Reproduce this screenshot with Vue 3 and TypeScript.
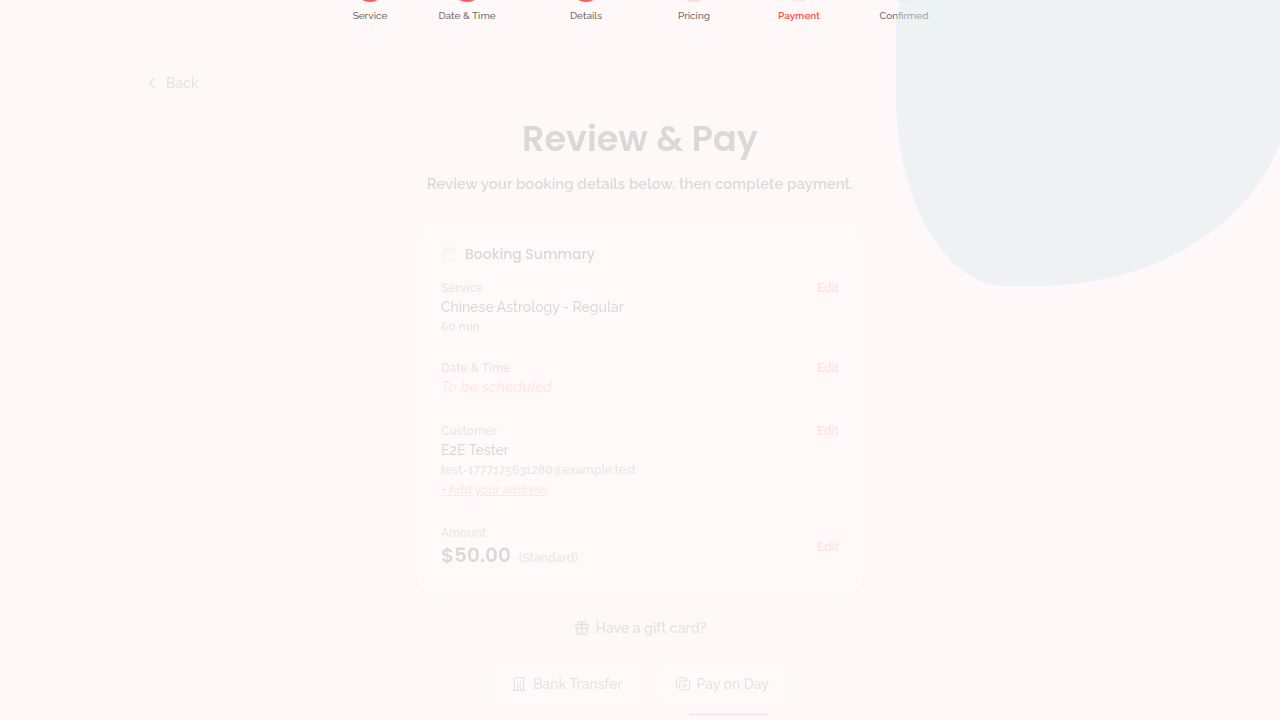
<script setup lang="ts">
interface Step { label: string; state: string }
const steps: Step[] = [
  { label: 'Service', state: 'done' },
  { label: 'Date & Time', state: 'done' },
  { label: 'Details', state: 'done' },
  { label: 'Pricing', state: 'soft' },
  { label: 'Payment', state: 'current' },
  { label: 'Confirmed', state: 'next' },
]
</script>

<template>
  <div class="page">
    <ol class="steps">
      <li v-for="s in steps" :key="s.label" :class="['step', s.state]">
        <span class="dot"></span>
        <span class="step-label">{{ s.label }}</span>
      </li>
    </ol>
    <main class="content">
      <button class="back" type="button">
        <svg width="16" height="16" viewBox="0 0 16 16" fill="none" stroke="currentColor" stroke-width="1.5" stroke-linecap="round" stroke-linejoin="round"><path d="M10 3.5 5.5 8l4.5 4.5" /></svg>
        Back
      </button>
      <h1>Review &amp; Pay</h1>
      <p class="lead">Review your booking details below, then complete payment.</p>

      <section class="card">
        <h2>
          <svg width="16" height="16" viewBox="0 0 16 16" fill="none" stroke="currentColor" stroke-width="1.3" stroke-linejoin="round"><path d="M5.5 2.700H4.500a1.500 1.500 0 0 0-1.500 1.500v8.600a1.500 1.500 0 0 0 1.500 1.500h7a1.500 1.500 0 0 0 1.500-1.500V4.200a1.500 1.500 0 0 0-1.500-1.500h-1M5.500 2.500a1 1 0 0 1 1-1h3a1 1 0 0 1 1 1c0 1-.8 1.600-1.600 1.600H7.100c-.8 0-1.600-.6-1.600-1.600z" /></svg>
          Booking Summary
        </h2>
        <div class="row">
          <div>
            <p class="label">Service</p>
            <p class="value">Chinese Astrology - Regular</p>
            <p class="sub">60 min</p>
          </div>
          <button class="edit" type="button">Edit</button>
        </div>
        <div class="row">
          <div>
            <p class="label">Date &amp; Time</p>
            <p class="value pending">To be scheduled</p>
          </div>
          <button class="edit" type="button">Edit</button>
        </div>
        <div class="row">
          <div>
            <p class="label">Customer</p>
            <p class="value">E2E Tester</p>
            <p class="sub">test-1777175631280@example.test</p>
            <a class="address" href="#">+ Add your address</a>
          </div>
          <button class="edit" type="button">Edit</button>
        </div>
        <div class="row amount">
          <div>
            <p class="label">Amount</p>
            <p class="total"><strong>$50.00</strong><span class="sub">(Standard)</span></p>
          </div>
          <button class="edit" type="button">Edit</button>
        </div>
      </section>

      <button class="gift" type="button">
        <svg width="16" height="16" viewBox="0 0 16 16" fill="none" stroke="currentColor" stroke-width="1.4" stroke-linejoin="round"><rect x="1.700" y="4.800" width="12.600" height="3.400" rx="1.200" /><path d="M3 8.200V13a1.300 1.300 0 0 0 1.300 1.300h7.400A1.300 1.300 0 0 0 13 13V8.200M8 4.800v9.500M8 4.800H5.200a1.700 1.700 0 1 1 2.200-2.200L8 4.800l.6-2.200a1.700 1.700 0 1 1 1.700 2.200H8" /></svg>
        Have a gift card?
      </button>

      <div class="methods">
        <button class="method" type="button">
          <svg width="16" height="16" viewBox="0 0 16 16" fill="none" stroke="currentColor" stroke-width="1.2" stroke-linejoin="round"><path d="M1.800 14.400h12.400M3.300 14.400V2.500a1 1 0 0 1 1-1h7.400a1 1 0 0 1 1 1v11.900M6.500 14.400v-3.200a1.500 1.500 0 0 1 3 0v3.200M5.800 4.300h1M9.200 4.300h1M5.800 7.300h1M9.200 7.300h1" /></svg>
          Bank Transfer
        </button>
        <button class="method" type="button">
          <svg width="16" height="16" viewBox="0 0 16 16" fill="none" stroke="currentColor" stroke-width="1.2" stroke-linejoin="round"><rect x="4.600" y="5" width="10" height="9" rx="2" /><path d="M4.600 11H3.300a1.900 1.900 0 0 1-1.900-1.900V4a2 2 0 0 1 2-2h6.800a2 2 0 0 1 2 2v1" /><circle cx="9.600" cy="9.500" r="1.400" /></svg>
          Pay on Day
        </button>
      </div>
      <div class="marker"></div>
    </main>
    <div class="blob"></div>
  </div>
</template>

<style>
body { background: #fff8f8; }
</style>

<style scoped>
.page {
  position: relative;
  height: 100vh;
  overflow: hidden;
  background: #fff8f8;
  color: #202020;
  font-family: Raleway, Lato, sans-serif;
  font-weight: 500;
}
h1, h2, p, ol { margin: 0; padding: 0; }
svg { flex: none; }
button {
  border: 0;
  padding: 0;
  background: none;
  font: inherit;
  color: inherit;
}
.blob {
  position: absolute;
  left: 70%;
  top: -110px;
  width: 394px;
  height: 396px;
  border-radius: 50% 50% 64% 28% / 35% 35% 50% 48%;
  background: rgba(216, 234, 239, 0.44);
  pointer-events: none;
}
.steps {
  display: grid;
  grid-template-columns: 80fr 114fr 124fr 92fr 118fr 92fr;
  max-width: 620px;
  margin: -30px auto 0;
  list-style: none;
}
.step {
  display: flex;
  flex-direction: column;
  align-items: center;
  gap: 6px;
  font-size: 10px;
  line-height: 16px;
}
.step-label { opacity: 0.65; }
.dot {
  width: 32px;
  height: 32px;
  border-radius: 50%;
  background: #ff5a5a;
}
.soft .dot { background: #ffd9d9; }
.current .dot { background: #fae9eb; }
.next .dot { background: #f3eded; }
.current { color: #ff4f4f; font-weight: 600; }
.current .step-label { opacity: 1; }
.content {
  display: flex;
  flex-direction: column;
  align-items: center;
  max-width: 992px;
  margin: 0 auto;
  padding-top: 49px;
  opacity: 0.15;
  will-change: opacity, transform;
}
.back {
  display: flex;
  align-items: center;
  gap: 6px;
  align-self: flex-start;
  color: #606060;
  font-size: 14px;
  line-height: 20px;
}
h1 {
  margin-top: 22px;
  color: #202020;
  font-family: Poppins, Inter, sans-serif;
  font-size: 35px;
  font-weight: 600;
  line-height: 48px;
}
.lead {
  margin-top: 9px;
  color: #282828;
  font-size: 15px;
  font-weight: 600;
  line-height: 24px;
}
.card {
  box-sizing: border-box;
  width: 448px;
  max-width: 100%;
  margin-top: 24px;
  padding: 24px;
  border: 1px solid #f6f3f3;
  border-radius: 20px;
  background: #ffffff;
  box-shadow: 0 1px 2px rgba(0, 0, 0, 0.1);
}
h2 {
  display: flex;
  align-items: center;
  gap: 8px;
  margin-bottom: 4px;
  color: #101010;
  font-family: Poppins, Inter, sans-serif;
  font-size: 14px;
  font-weight: 500;
  line-height: 18px;
}
h2 svg { color: #b0cdd4; }
.row {
  display: flex;
  justify-content: space-between;
  align-items: flex-start;
  padding: 12px 0 10px;
  border-bottom: 1px solid #f8f5f5;
}
.label, .edit { font-size: 12px; font-weight: 600; line-height: 18px; }
.label { color: #808080; }
.value { color: #181818; font-size: 14px; line-height: 21px; }
.pending { padding-bottom: 1px; color: #ff8080; font-size: 15px; font-style: italic; }
.sub { color: #7c7c7c; font-size: 12px; font-weight: 600; line-height: 18px; }
.edit { color: #ff5c5c; }
.address {
  display: block;
  margin-top: 1px;
  color: #ff8080;
  font-size: 12px;
  font-weight: 600;
  line-height: 21px;
}
.amount {
  align-items: center;
  padding-bottom: 0;
  border-bottom: 0;
}
.total {
  display: flex;
  align-items: baseline;
  gap: 8px;
  padding-bottom: 2px;
  line-height: 26px;
}
.total strong {
  color: #202020;
  font-family: Poppins, Inter, sans-serif;
  font-size: 20px;
  font-weight: 600;
}
.gift {
  display: flex;
  align-items: center;
  gap: 6px;
  margin-top: 23px;
  color: #6c6c6c;
  font-size: 14px;
  font-weight: 600;
  line-height: 20px;
}
.methods { display: flex; gap: 12px; margin-top: 26px; }
.method {
  display: flex;
  align-items: center;
  gap: 6px;
  padding: 10px 20px;
  border-radius: 12px;
  background: #ffffff;
  color: #606060;
  font-size: 14px;
  line-height: 20px;
}
.marker {
  width: 80px;
  height: 1px;
  margin: 10px 0 0 178px;
  border-radius: 1px;
  background: #ff4060;
}
</style>
